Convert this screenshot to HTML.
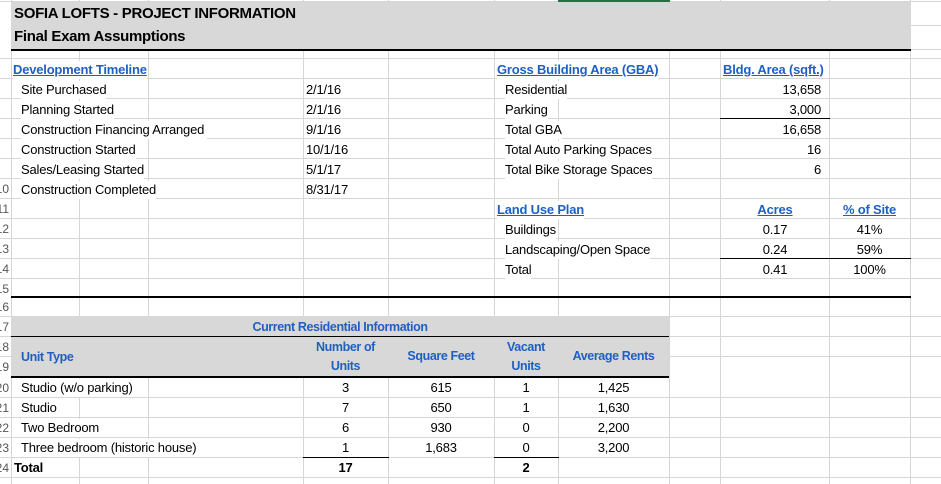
<!DOCTYPE html>
<html><head><meta charset="utf-8"><style>
*{margin:0;padding:0;box-sizing:border-box}
body{width:941px;height:484px;overflow:hidden;background:#fff;font-family:"Liberation Sans",sans-serif;font-size:13px;color:#000;position:relative}
.h{position:absolute;height:1px;background:#d6d6d6}
.v{position:absolute;width:1px;background:#d6d6d6}
.k{position:absolute;background:#000}
.t{position:absolute;height:18px;line-height:18px;white-space:nowrap;background:#fff;letter-spacing:-0.2px}
.n{background:transparent}
.r{text-align:right}
.c{text-align:center}
.b{color:#1f5fc4;font-weight:bold;text-decoration:underline}
.bh{color:#1f5fc4;font-weight:bold;font-size:12.5px;letter-spacing:-0.4px;background:transparent}
.rc{position:absolute;left:0;top:0;width:10px;height:484px;overflow:hidden}
.rn{position:absolute;right:1px;font-size:12px;color:#555;line-height:20px;text-align:right;white-space:nowrap}
</style></head><body>
<div class="h" style="left:0;top:1px;width:941px"></div>
<div class="h" style="left:910px;top:25px;width:31px"></div>
<div class="h" style="left:910px;top:49px;width:31px"></div>
<div class="h" style="left:0;top:58px;width:941px"></div>
<div class="h" style="left:0;top:78px;width:941px"></div>
<div class="h" style="left:0;top:98px;width:941px"></div>
<div class="h" style="left:0;top:118px;width:941px"></div>
<div class="h" style="left:0;top:138px;width:941px"></div>
<div class="h" style="left:0;top:158px;width:941px"></div>
<div class="h" style="left:0;top:178px;width:941px"></div>
<div class="h" style="left:0;top:198px;width:941px"></div>
<div class="h" style="left:0;top:218px;width:941px"></div>
<div class="h" style="left:0;top:238px;width:941px"></div>
<div class="h" style="left:0;top:258px;width:941px"></div>
<div class="h" style="left:0;top:278px;width:941px"></div>
<div class="h" style="left:0;top:316px;width:941px"></div>
<div class="h" style="left:0;top:336px;width:941px"></div>
<div class="h" style="left:0;top:356px;width:941px"></div>
<div class="h" style="left:0;top:397px;width:941px"></div>
<div class="h" style="left:0;top:417px;width:941px"></div>
<div class="h" style="left:0;top:437px;width:941px"></div>
<div class="h" style="left:0;top:457px;width:941px"></div>
<div class="h" style="left:0;top:477px;width:941px"></div>
<div class="v" style="left:11px;top:0;height:484px"></div>
<div class="v" style="left:79px;top:0;height:484px"></div>
<div class="v" style="left:148px;top:0;height:484px"></div>
<div class="v" style="left:303px;top:0;height:484px"></div>
<div class="v" style="left:388px;top:0;height:484px"></div>
<div class="v" style="left:494px;top:0;height:484px"></div>
<div class="v" style="left:558px;top:0;height:484px"></div>
<div class="v" style="left:669px;top:0;height:484px"></div>
<div class="v" style="left:720px;top:0;height:484px"></div>
<div class="v" style="left:829px;top:0;height:484px"></div>
<div class="v" style="left:910px;top:0;height:484px"></div>
<div class="k" style="left:558px;top:0;width:112px;height:2px;background:#217346"></div>
<div style="position:absolute;left:11px;top:2px;width:900px;height:47px;background:#d8d8d8"></div>
<div class="k" style="left:11px;top:49px;width:900px;height:2px"></div>
<div class="t n" style="left:14px;top:5px;font-size:15px;font-weight:bold;line-height:18px;letter-spacing:-0.3px">SOFIA LOFTS - PROJECT INFORMATION</div>
<div class="t n" style="left:14px;top:28px;font-size:15px;font-weight:bold;line-height:18px;letter-spacing:-0.3px">Final Exam Assumptions</div>
<div class="rc">
<div class="rn" style="top:179px">10</div><div class="rn" style="top:199px">11</div><div class="rn" style="top:219px">12</div><div class="rn" style="top:239px">13</div><div class="rn" style="top:259px">14</div><div class="rn" style="top:279px">15</div><div class="rn" style="top:297px">16</div><div class="rn" style="top:317px">17</div><div class="rn" style="top:337px">18</div><div class="rn" style="top:357px">19</div><div class="rn" style="top:378px">20</div><div class="rn" style="top:398px">21</div><div class="rn" style="top:418px">22</div><div class="rn" style="top:438px">23</div><div class="rn" style="top:458px">24</div>
</div>
<div class="t b" style="left:13px;top:61px">Development Timeline</div>
<div class="t" style="left:21px;top:81px">Site Purchased</div>
<div class="t" style="left:21px;top:101px">Planning Started</div>
<div class="t" style="left:21px;top:121px;padding-right:3px">Construction Financing Arranged</div>
<div class="t" style="left:21px;top:141px">Construction Started</div>
<div class="t" style="left:21px;top:161px">Sales/Leasing Started</div>
<div class="t" style="left:21px;top:181px">Construction Completed</div>
<div class="t n" style="left:306px;top:81px">2/1/16</div>
<div class="t n" style="left:306px;top:101px">2/1/16</div>
<div class="t n" style="left:306px;top:121px">9/1/16</div>
<div class="t n" style="left:306px;top:141px">10/1/16</div>
<div class="t n" style="left:306px;top:161px">5/1/17</div>
<div class="t n" style="left:306px;top:181px">8/31/17</div>
<div class="t b" style="left:497px;top:61px">Gross Building Area (GBA)</div>
<div class="t" style="left:505px;top:81px">Residential</div>
<div class="t" style="left:505px;top:101px">Parking</div>
<div class="t" style="left:505px;top:121px">Total GBA</div>
<div class="t" style="left:505px;top:141px">Total Auto Parking Spaces</div>
<div class="t" style="left:505px;top:161px">Total Bike Storage Spaces</div>
<div class="t b n" style="left:723px;top:61px">Bldg. Area (sqft.)</div>
<div class="t n r" style="left:720px;top:81px;width:101px">13,658</div>
<div class="t n r" style="left:720px;top:101px;width:101px">3,000</div>
<div class="k" style="left:720px;top:118px;width:110px;height:1px"></div>
<div class="t n r" style="left:720px;top:121px;width:101px">16,658</div>
<div class="t n r" style="left:720px;top:141px;width:101px">16</div>
<div class="t n r" style="left:720px;top:161px;width:101px">6</div>
<div class="t b" style="left:497px;top:201px">Land Use Plan</div>
<div class="t" style="left:505px;top:221px">Buildings</div>
<div class="t" style="left:505px;top:241px">Landscaping/Open Space</div>
<div class="t" style="left:505px;top:261px">Total</div>
<div class="t b n c" style="left:720px;top:201px;width:110px">Acres</div>
<div class="t n c" style="left:720px;top:221px;width:110px">0.17</div>
<div class="t n c" style="left:720px;top:241px;width:110px">0.24</div>
<div class="k" style="left:720px;top:258px;width:191px;height:1px"></div>
<div class="t n c" style="left:720px;top:261px;width:110px">0.41</div>
<div class="t b n c" style="left:829px;top:201px;width:81px">% of Site</div>
<div class="t n c" style="left:829px;top:221px;width:81px">41%</div>
<div class="t n c" style="left:829px;top:241px;width:81px">59%</div>
<div class="t n c" style="left:829px;top:261px;width:81px">100%</div>
<div class="k" style="left:11px;top:296px;width:900px;height:2px"></div>
<div style="position:absolute;left:11px;top:317px;width:658px;height:60px;background:#d8d8d8"></div>
<div class="k" style="left:11px;top:336px;width:658px;height:1px"></div>
<div class="k" style="left:11px;top:376px;width:658px;height:2px"></div>
<div class="t bh c" style="left:11px;top:318px;width:658px">Current Residential Information</div>
<div class="t bh" style="left:21px;top:348px">Unit Type</div>
<div class="t bh c" style="left:303px;top:338px;width:85px">Number of</div>
<div class="t bh c" style="left:303px;top:357px;width:85px">Units</div>
<div class="t bh c" style="left:388px;top:347px;width:106px">Square Feet</div>
<div class="t bh c" style="left:494px;top:338px;width:64px">Vacant</div>
<div class="t bh c" style="left:494px;top:357px;width:64px">Units</div>
<div class="t bh c" style="left:558px;top:347px;width:111px">Average Rents</div>
<div class="t" style="left:21px;top:379px">Studio (w/o parking)</div>
<div class="t" style="left:21px;top:399px">Studio</div>
<div class="t" style="left:21px;top:419px">Two Bedroom</div>
<div class="t" style="left:21px;top:439px">Three bedroom (historic house)</div>
<div class="t" style="left:14px;top:459px;font-weight:bold">Total</div>
<div class="t n c" style="left:303px;top:379px;width:85px">3</div>
<div class="t n c" style="left:303px;top:399px;width:85px">7</div>
<div class="t n c" style="left:303px;top:419px;width:85px">6</div>
<div class="t n c" style="left:303px;top:439px;width:85px">1</div>
<div class="t n c" style="left:303px;top:459px;width:85px;font-weight:bold">17</div>
<div class="t n c" style="left:388px;top:379px;width:106px">615</div>
<div class="t n c" style="left:388px;top:399px;width:106px">650</div>
<div class="t n c" style="left:388px;top:419px;width:106px">930</div>
<div class="t n c" style="left:388px;top:439px;width:106px">1,683</div>
<div class="t n c" style="left:494px;top:379px;width:64px">1</div>
<div class="t n c" style="left:494px;top:399px;width:64px">1</div>
<div class="t n c" style="left:494px;top:419px;width:64px">0</div>
<div class="t n c" style="left:494px;top:439px;width:64px">0</div>
<div class="t n c" style="left:494px;top:459px;width:64px;font-weight:bold">2</div>
<div class="t n c" style="left:558px;top:379px;width:111px">1,425</div>
<div class="t n c" style="left:558px;top:399px;width:111px">1,630</div>
<div class="t n c" style="left:558px;top:419px;width:111px">2,200</div>
<div class="t n c" style="left:558px;top:439px;width:111px">3,200</div>
<div class="k" style="left:303px;top:457px;width:86px;height:1px"></div>
<div class="k" style="left:494px;top:457px;width:65px;height:1px"></div>
</body></html>
